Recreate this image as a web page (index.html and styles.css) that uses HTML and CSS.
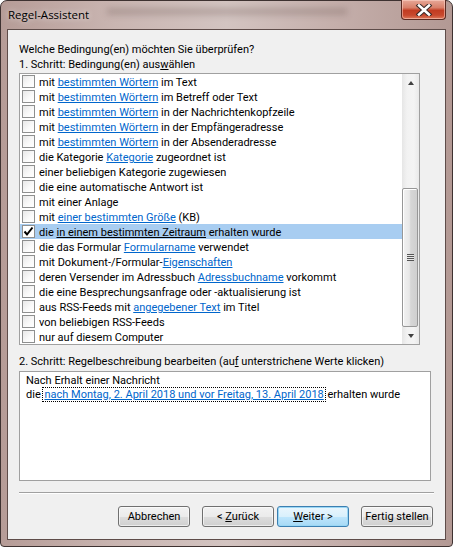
FILE: index.html
```html
<!DOCTYPE html>
<html lang="de">
<head>
<meta charset="utf-8">
<title>Regel-Assistent</title>
<link rel="stylesheet" href="styles.css">
</head>
<body>
<div class="window">
  <div class="titlebar">
    <span class="title">Regel-Assistent</span>
    <span class="ghost"></span>
    <div class="close">
      <svg width="18" height="12" viewBox="0 0 18 12">
        <path d="M4 1.5 L14 10.5 M14 1.5 L4 10.5" stroke="#3a2a28" stroke-width="4.6" stroke-linecap="square"/>
        <path d="M4 1.5 L14 10.5 M14 1.5 L4 10.5" stroke="#ffffff" stroke-width="2.6" stroke-linecap="square"/>
      </svg>
    </div>
  </div>
  <div class="client">
    <div class="label first">Welche Bedingung(en) möchten Sie überprüfen?</div>
    <div class="label">1. Schritt: Bedingung(en) aus<u>w</u>ählen</div>
    <div class="listbox">
      <div class="rows">
        <div class="row"><span class="cb"></span><span class="txt">mit <a>bestimmten Wörtern</a> im Text</span></div>
        <div class="row"><span class="cb"></span><span class="txt">mit <a>bestimmten Wörtern</a> im Betreff oder Text</span></div>
        <div class="row"><span class="cb"></span><span class="txt">mit <a>bestimmten Wörtern</a> in der Nachrichtenkopfzeile</span></div>
        <div class="row"><span class="cb"></span><span class="txt">mit <a>bestimmten Wörtern</a> in der Empfängeradresse</span></div>
        <div class="row"><span class="cb"></span><span class="txt">mit <a>bestimmten Wörtern</a> in der Absenderadresse</span></div>
        <div class="row"><span class="cb"></span><span class="txt">die Kategorie <a>Kategorie</a> zugeordnet ist</span></div>
        <div class="row"><span class="cb"></span><span class="txt">einer beliebigen Kategorie zugewiesen</span></div>
        <div class="row"><span class="cb"></span><span class="txt">die eine automatische Antwort ist</span></div>
        <div class="row"><span class="cb"></span><span class="txt">mit einer Anlage</span></div>
        <div class="row"><span class="cb"></span><span class="txt">mit <a>einer bestimmten Größe</a> (KB)</span></div>
        <div class="row selected"><span class="cb"><svg width="11" height="11" viewBox="0 0 11 11"><path d="M1.5 5.5 L4 8.5 L9.5 1.5" fill="none" stroke="#000" stroke-width="2"/></svg></span><span class="txt">die <a>in einem bestimmten Zeitraum</a> erhalten wurde</span></div>
        <div class="row"><span class="cb"></span><span class="txt">die das Formular <a>Formularname</a> verwendet</span></div>
        <div class="row"><span class="cb"></span><span class="txt">mit Dokument-/Formular-<a>Eigenschaften</a></span></div>
        <div class="row"><span class="cb"></span><span class="txt">deren Versender im Adressbuch <a>Adressbuchname</a> vorkommt</span></div>
        <div class="row"><span class="cb"></span><span class="txt">die eine Besprechungsanfrage oder -aktualisierung ist</span></div>
        <div class="row"><span class="cb"></span><span class="txt">aus RSS-Feeds mit <a>angegebener Text</a> im Titel</span></div>
        <div class="row"><span class="cb"></span><span class="txt">von beliebigen RSS-Feeds</span></div>
        <div class="row"><span class="cb"></span><span class="txt">nur auf diesem Computer</span></div>
      </div>
      <div class="scrollbar">
        <div class="sb-btn"><span class="arrow up"></span></div>
        <div class="sb-track">
          <div class="sb-thumb"><span class="grip"></span></div>
        </div>
        <div class="sb-btn"><span class="arrow down"></span></div>
      </div>
    </div>
    <div class="label step2">2. Schritt: Regelbeschreibung bearbeiten (au<u>f</u> unterstrichene Werte klicken)</div>
    <div class="desc">
      <div>Nach Erhalt einer Nachricht</div>
      <div>die <span class="focus"><a>nach Montag, 2. April 2018 und vor Freitag, 13. April 2018</a></span> erhalten wurde</div>
    </div>
    <div class="sep"></div>
    <div class="buttons">
      <button class="btn">Abbrechen</button>
      <div class="nav">
        <button class="btn">&lt; <u>Z</u>urück</button>
        <button class="btn default"><u>W</u>eiter &gt;</button>
      </div>
      <button class="btn">Fertig stellen</button>
    </div>
  </div>
</div>
</body>
</html>
```
FILE: styles.css
```css
html, body {
  margin: 0;
  padding: 0;
  background: #ffffff;
}

body {
  font-family: Roboto, "Open Sans", sans-serif;
  font-size: 11px;
  color: #000;
}

.window {
  width: 453px;
  height: 547px;
  box-sizing: border-box;
  border: 1px solid #3e3231;
  border-radius: 7px 7px 4px 4px;
  background: linear-gradient(90deg, #b69c97 0%, #c9b5b1 25%, #d3c4c1 50%, #c4aeaa 75%, #b39994 100%);
  padding: 0 6px 6px 6px;
  display: flex;
  flex-direction: column;
}

.titlebar {
  height: 28px;
  display: flex;
  align-items: flex-start;
  position: relative;
}

.title {
  font-family: "Open Sans", sans-serif;
  font-size: 11.5px;
  margin-top: 6px;
  margin-left: 1px;
  color: #000;
  text-shadow: 0 0 6px rgba(255,255,255,0.8);
}

.ghost {
  position: absolute;
  left: 100px;
  top: 7px;
  width: 240px;
  height: 7px;
  background: rgba(90, 70, 68, 0.25);
  filter: blur(3px);
}

.close {
  position: absolute;
  right: 0;
  top: -1px;
  width: 45px;
  height: 20px;
  box-sizing: border-box;
  border: 1px solid #5a2a22;
  border-top: none;
  border-radius: 0 0 4px 4px;
  background: linear-gradient(180deg, #e7a898 0%, #d8806a 40%, #c23c22 55%, #c8482d 80%, #de7a5c 100%);
  box-shadow: inset 0 0 0 1px rgba(255,220,210,0.5);
  display: flex;
  align-items: center;
  justify-content: center;
}

.client {
  flex: 1;
  border: 1px solid #5e4c49;
  background: #f0f0f0;
  padding: 12px 11px 0 11px;
  display: flex;
  flex-direction: column;
}

.label {
  height: 15px;
  line-height: 15px;
  white-space: nowrap;
}

.listbox {
  margin-top: 1px;
  width: 401px;
  height: 272px;
  box-sizing: border-box;
  border: 1px solid #a0a0a0;
  background: #fff;
  display: flex;
  overflow: hidden;
}

.rows {
  flex: 1;
  display: flex;
  flex-direction: column;
}

.row {
  height: 15px;
  flex: 0 0 15px;
  display: flex;
  align-items: center;
  white-space: nowrap;
}

.txt {
  line-height: 13px;
  padding-top: 2px;
}

.row.selected {
  background: #a8cdf1;
}

.row.selected a {
  color: #000;
}

.cb {
  width: 13px;
  height: 13px;
  box-sizing: border-box;
  border: 1px solid #8e8f8f;
  background: linear-gradient(135deg, #e8e8e8 0%, #fafafa 60%, #ffffff 100%);
  margin-left: 2px;
  margin-right: 4px;
  display: flex;
  align-items: center;
  justify-content: center;
  flex: 0 0 13px;
}

.row.selected .cb {
  background: #fff;
}

a {
  color: #0066cc;
  text-decoration: underline;
}

.scrollbar {
  width: 17px;
  flex: 0 0 17px;
  display: flex;
  flex-direction: column;
  background: linear-gradient(90deg, #e6e6e6 0%, #f2f2f2 30%, #f4f4f4 70%, #e9e9e9 100%);
}

.sb-btn {
  height: 17px;
  flex: 0 0 17px;
  display: flex;
  align-items: center;
  justify-content: center;
}

.arrow {
  width: 0;
  height: 0;
  border-left: 3.5px solid transparent;
  border-right: 3.5px solid transparent;
}

.arrow.up {
  border-bottom: 4px solid #404040;
}

.arrow.down {
  border-top: 4px solid #404040;
}

.sb-track {
  flex: 1;
  display: flex;
  flex-direction: column;
  justify-content: flex-end;
}

.sb-thumb {
  height: 139px;
  margin: 0 1px 0 0;
  box-sizing: border-box;
  border: 1px solid #979797;
  border-radius: 2px;
  background: linear-gradient(90deg, #f2f2f2 0%, #e8e8e8 45%, #d6d6d6 55%, #cfcfcf 100%);
  box-shadow: inset 1px 1px 0 #fff;
  display: flex;
  align-items: center;
  justify-content: center;
}

.grip {
  width: 7px;
  height: 7px;
  background: repeating-linear-gradient(180deg, #555 0px, #555 1px, #e8e8e8 1px, #e8e8e8 2px);
}

.step2 {
  margin-top: 9px;
}

.desc {
  margin-top: 2px;
  width: 412px;
  height: 110px;
  box-sizing: border-box;
  border: 1px solid #a0a0a0;
  background: #fff;
  padding: 2px 0 0 6px;
  line-height: 14px;
  white-space: nowrap;
}

.focus {
  outline: 1px dotted #000;
  outline-offset: 0px;
  padding: 0 1px;
}

.sep {
  margin-top: 11px;
  width: 415px;
  height: 1px;
  background: #a0a0a0;
  border-bottom: 1px solid #fff;
}

.buttons {
  margin-top: 12px;
  display: flex;
  justify-content: flex-end;
  gap: 12px;
  width: 414px;
}

.nav {
  display: flex;
  gap: 3px;
}

.btn {
  font-family: Roboto, "Open Sans", sans-serif;
  font-size: 11px;
  color: #000;
  width: 72px;
  height: 21px;
  padding: 0;
  box-sizing: border-box;
  border: 1px solid #707070;
  border-radius: 3px;
  background: linear-gradient(180deg, #f2f2f2 0%, #ebebeb 50%, #dddddd 51%, #cfcfcf 100%);
  box-shadow: inset 0 0 0 1px rgba(255,255,255,0.6);
}

.btn.default {
  border-color: #3c7fb1;
  background: linear-gradient(180deg, #eaf6fd 0%, #d9f0fc 50%, #bee6fd 51%, #a7d9f5 100%);
  box-shadow: inset 0 0 0 1px #9ad7f5;
}
```
